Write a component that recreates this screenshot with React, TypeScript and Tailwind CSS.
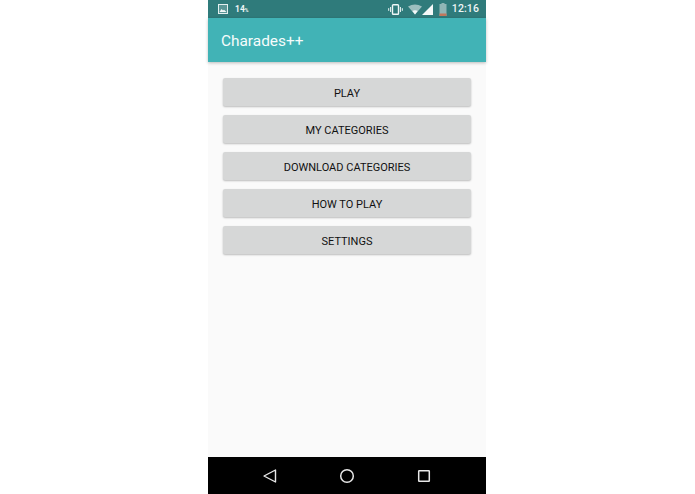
import React from 'react';

const MENU_ITEMS = ['PLAY', 'MY CATEGORIES', 'DOWNLOAD CATEGORIES', 'HOW TO PLAY', 'SETTINGS'];

const StatusBar = () => (
  <div className="h-[18px] bg-[#2f7b7b] flex items-center pl-[10px] pr-[7px] text-white">
    {/* Image notification */}
    <svg width="10" height="10" viewBox="0 0 10 10" className="shrink-0">
      <rect x="0.5" y="0.5" width="9" height="9" fill="none" stroke="#e4efef" strokeWidth="1" />
      <rect x="1" y="1" width="8" height="8" fill="#dfecec" fillOpacity="0.25" />
      <path d="M1.5 8 L3.5 5 L5 6.5 L6 5.8 L8.5 8 Z" fill="#f2f8f8" />
    </svg>
    <span className="ml-[7px] text-[8.5px] font-bold leading-none text-[#eef6f6]">
      14<span className="text-[5px]">%</span>
    </span>
    <div className="ml-auto flex items-center">
      {/* Vibrate */}
      <svg width="15" height="11" viewBox="0 0 15 11">
        <rect x="4.5" y="0.8" width="6" height="9.4" rx="0.8" fill="none" stroke="#eef6f6" strokeWidth="1.4" />
        <path d="M2.6 3 V8 M12.4 3 V8" stroke="#eef6f6" strokeWidth="1" />
        <path d="M0.7 4.2 V6.8 M14.3 4.2 V6.8" stroke="#eef6f6" strokeWidth="1" />
      </svg>
      {/* Wifi */}
      <svg width="14" height="11" viewBox="0 0 14 11" className="ml-[5px]">
        <path d="M0 2.6 Q7 -1.6 14 2.6 L7 10.5 Z" fill="#9cc0c0" />
        <path d="M4.4 7 Q7 5.6 9.6 7 L7 10.5 Z" fill="#f2f8f8" />
      </svg>
      {/* Signal */}
      <svg width="11" height="11" viewBox="0 0 11 11">
        <path d="M0 11 L11 0 V11 Z" fill="#f4f9f9" />
      </svg>
      {/* Battery */}
      <svg width="8" height="13" viewBox="0 0 8 13" className="ml-[6px]">
        <rect x="2.5" y="0" width="3" height="1.5" fill="#8fb5b5" />
        <rect x="0.5" y="1" width="7" height="12" fill="#8fb5b5" />
        <rect x="0.5" y="10.5" width="7" height="2.5" fill="#c0775c" />
      </svg>
      <span className="ml-[5px] text-[10.5px] font-medium leading-none tracking-[0.1px] text-[#eef6f6] [font-family:Roboto,sans-serif]">12:16</span>
    </div>
  </div>
);

const AppBar = () => (
  <div className="h-[44px] bg-[#41b3b6] flex items-center pl-[13px] pt-[4px] shadow-[0_1px_3px_rgba(0,0,0,0.25)] relative">
    <span className="text-[15.4px] font-normal text-[#f6fcfc] [font-family:Roboto,sans-serif]">Charades++</span>
  </div>
);

const NavBar = () => (
  <div className="h-[37px] bg-black flex items-center justify-center gap-[61px]">
    <svg width="16" height="16" viewBox="0 0 16 16">
      <path d="M13.5 2 L2 8 L13.5 14 Z" fill="none" stroke="#e8e8e8" strokeWidth="1.4" strokeLinejoin="round" />
    </svg>
    <svg width="16" height="16" viewBox="0 0 16 16">
      <circle cx="8" cy="8" r="6.3" fill="none" stroke="#e8e8e8" strokeWidth="1.5" />
    </svg>
    <svg width="16" height="16" viewBox="0 0 16 16">
      <rect x="2.7" y="2.7" width="10.6" height="10.6" rx="0.5" fill="none" stroke="#e8e8e8" strokeWidth="1.5" />
    </svg>
  </div>
);

export default function App() {
  return (
    <div className="w-[695px] h-[494px] bg-white flex justify-center [font-family:Roboto,sans-serif]">
      <div className="w-[278px] h-full flex flex-col ml-[-1px]">
        <StatusBar />
        <AppBar />
        <main className="flex-1 bg-[#fafafa] px-[15px] pt-[16px] flex flex-col gap-[9px]">
          {MENU_ITEMS.map((label) => (
            <button
              key={label}
              className="h-[28px] w-full rounded-[2px] bg-[#d6d7d7] pt-[4px] text-[11px] font-normal text-[#111111] shadow-[0_1px_2px_rgba(0,0,0,0.25)]"
            >
              {label}
            </button>
          ))}
        </main>
        <NavBar />
      </div>
    </div>
  );
}
